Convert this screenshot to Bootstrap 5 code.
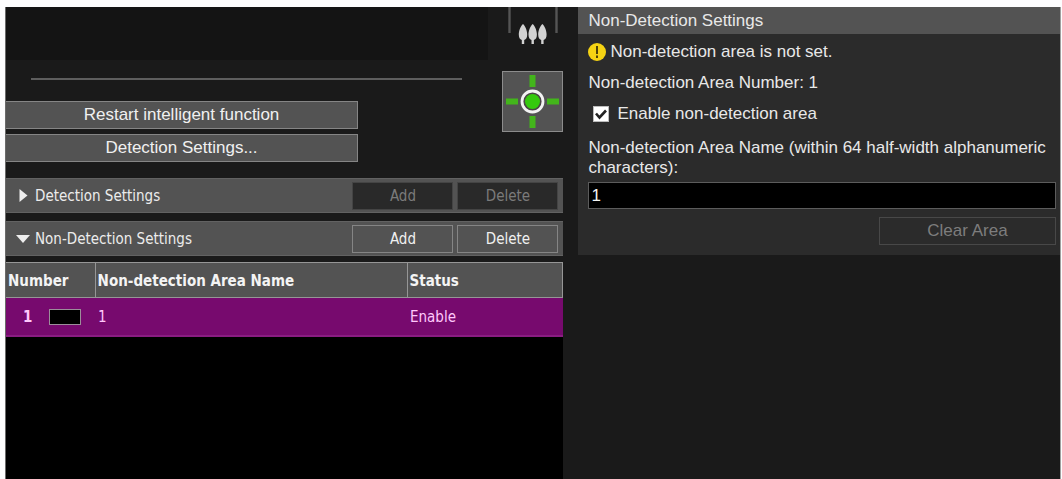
<!DOCTYPE html>
<html lang="en">
<head>
<meta charset="utf-8">
<meta name="viewport" content="width=device-width, initial-scale=1">
<title>Non-Detection Settings</title>
<link href="https://cdn.jsdelivr.net/npm/bootstrap@5.3.0/dist/css/bootstrap.min.css" rel="stylesheet">
<style>
  body { background: #fdfdfe; font: 17px/20px "Liberation Sans", Arial, sans-serif; color: #e8e8e8; }
  .shell { background: #1a1a1a; border-left: 1px solid #6a6a6a; border-right: 1px solid #a0a0a0; margin: 7px 1px 0 5px; min-height: calc(100vh - 7px); display: grid; grid-template-columns: 558fr 482fr; column-gap: 15px; }
  .view-strip { background: #141414; height: 53px; width: 482px; max-width: 100%; }
  .track { border: 0; border-top: 2px solid #5e5e5e; opacity: 1; margin: 18px 40px 21px 25px; }
  .zoom-end { width: 50px; height: 37px; }
  .btn { --bs-btn-font-size: 17px; --bs-btn-line-height: 20px; --bs-btn-padding-y: 2px; --bs-btn-padding-x: 6px; --bs-btn-border-radius: 0; --bs-btn-color: #f0f0f0; --bs-btn-bg: #535353; --bs-btn-border-color: #858585; --bs-btn-hover-color: #fff; --bs-btn-hover-bg: #616161; --bs-btn-hover-border-color: #999; --bs-btn-active-bg: #444; --bs-btn-active-color: #fff; --bs-btn-disabled-opacity: 1; height: 28px; }
  .wide-actions { width: 352px; max-width: 100%; gap: 5px; }
  .wide-actions .btn { border-left-width: 0; }
  .end-tools { gap: 27px; }
  .tool-btn { width: 61px; height: 61px; --bs-btn-padding-y: 0; --bs-btn-padding-x: 0; --bs-btn-border-color: #8c8c8c; }
  .tahoma { font-family: "DejaVu Sans Condensed", "DejaVu Sans", sans-serif; font-size: 15px; }
  .section-bar { background: #535353; border-top: 1px solid #626262; border-bottom: 1px solid #626262; height: 35px; padding-right: 5px; gap: 4px; }
  .section-bar .btn { width: 101px; font-size: 15px; font-family: inherit; }
  .section-bar .btn:disabled { --bs-btn-disabled-bg: #292929; --bs-btn-disabled-color: #7b7b7b; --bs-btn-disabled-border-color: #444; }
  .fold { background: none; border: 0; padding: 0 0 0 10px; color: #ececec; font-size: 15px; gap: 5px; }
  .area-list { background: #000; margin-top: 6px; }
  .area-table { --bs-table-bg: transparent; margin: 0; table-layout: fixed; color: #f0f0f0; line-height: 20px; }
  .area-table th, .area-table td { border: 0; vertical-align: middle; padding: 1px 3px 0; }
  .area-table thead th { height: 35px; background: #535353; border: 1px solid #969696; border-left-width: 0; padding: 2px 2px 0; color: #f4f4f4; }
  .area-table tbody td, .area-table tbody th { height: 38px; background: #770a6e; border-bottom: 2px solid #8a1d82; color: #ffc8fb; }
  .swatch { width: 32px; height: 16px; background: #000; border: 1px solid #9c8d9a; }
  .row-key { padding-left: 14px; gap: 17px; }
  .side-panel { background: #2b2b2b; }
  .side-title { background: #535353; font-size: 17px; line-height: 20px; padding: 4px 10px 3px; }
  .side-body { padding: 8px 4px 10px 10px; }
  .side-body .stack-row { margin-bottom: 11px; }
  .side-body .check-row { margin-bottom: 14px; padding-left: 5px; gap: 8px; }
  .form-check-input { margin: 0; width: 16px; height: 16px; border-radius: 0 !important; background-color: #fff; border: 1px solid #bbb; }
  .form-check-input:checked { background-color: #fff; border-color: #bbb; background-size: 16px; background-image: url("data:image/svg+xml,%3Csvg xmlns='http://www.w3.org/2000/svg' viewBox='0 0 16 16'%3E%3Cpath d='M3 7.500l3.500 4 6.500-7' fill='none' stroke='%23222' stroke-width='2.600'/%3E%3C/svg%3E"); }
  .form-control, .form-control:focus { background: #000; color: #f4f4f4; border: 1px solid #5c5c5c; border-radius: 0; font-size: 17px; line-height: 20px; padding: 2px; height: 27px; min-height: 0; margin-top: 4px; }
  .clear-btn { width: 177px; --bs-btn-disabled-bg: #2b2b2b; --bs-btn-disabled-color: #7d7d7d; --bs-btn-disabled-border-color: #484848; }
</style>
</head>
<body>
<main class="shell">
  <section class="d-flex flex-column">
    <div class="d-flex">
      <div class="flex-grow-1">
        <div class="view-strip"></div>
        <hr class="track">
        <div class="wide-actions d-flex flex-column">
          <button type="button" class="btn">Restart intelligent function</button>
          <button type="button" class="btn">Detection Settings...</button>
        </div>
      </div>
      <div class="end-tools d-flex flex-column align-items-center">
        <svg class="zoom-end" viewBox="0 0 50 37" role="img" aria-label="Telephoto end">
          <path d="M1.500 0v26M48.500 0v26" stroke="#555" stroke-width="2.400"/>
          <g fill="#d2d2d2">
            <path id="tree" d="M15 17c2 1.500 4.200 6.500 4.200 10.500 0 3-1 5-3 5.500v4h-2.400v-4c-2-.5-3-2.500-3-5.500 0-4 2.200-9 4.200-10.500z"/>
            <use href="#tree" x="9.700"/><use href="#tree" x="19.400"/>
          </g>
        </svg>
        <button type="button" class="btn tool-btn" aria-label="Auto adjust">
          <svg class="d-block" width="59" height="59" viewBox="0 0 59 59">
            <path d="M29.500 3v12M29.500 44v12M3 29.500h12M44 29.500h12" stroke="#43b51b" stroke-width="6"/>
            <circle cx="29.500" cy="29.500" r="10.500" fill="#4a4545" stroke="#f3f3f3" stroke-width="2.800"/>
            <circle cx="29.500" cy="29.500" r="7.500" fill="#35c90d"/>
          </svg>
        </button>
      </div>
    </div>

    <div class="tahoma d-flex flex-column gap-2 pt-3">
      <div class="section-bar d-flex align-items-center">
        <button type="button" class="fold d-flex align-items-center flex-grow-1" aria-expanded="false">
          <svg width="14" height="14" viewBox="0 0 14 14"><path d="M3.500 0v13l8-6.500z" fill="#eee"/></svg>Detection Settings</button>
        <button type="button" class="btn" disabled>Add</button>
        <button type="button" class="btn" disabled>Delete</button>
      </div>
      <div class="section-bar d-flex align-items-center">
        <button type="button" class="fold d-flex align-items-center flex-grow-1" aria-expanded="true">
          <svg width="14" height="14" viewBox="0 0 14 14"><path d="M0 3h14l-7 8z" fill="#eee"/></svg>Non-Detection Settings</button>
        <button type="button" class="btn">Add</button>
        <button type="button" class="btn">Delete</button>
      </div>
    </div>

    <div class="area-list tahoma flex-grow-1">
      <table class="table area-table">
        <colgroup><col style="width:16%"><col style="width:56%"><col></colgroup>
        <thead><tr><th scope="col">Number</th><th scope="col">Non-detection Area Name</th><th scope="col">Status</th></tr></thead>
        <tbody><tr>
          <th scope="row"><div class="row-key d-flex align-items-center">1<span class="swatch"></span></div></th>
          <td>1</td><td>Enable</td>
        </tr></tbody>
      </table>
    </div>
  </section>

  <aside>
    <div class="side-panel">
      <h1 class="side-title m-0 fw-normal">Non-Detection Settings</h1>
      <form class="side-body">
        <div class="stack-row d-flex align-items-center gap-1">
          <svg width="18" height="20" viewBox="0 0 18 20"><circle cx="9" cy="10" r="9" fill="#f5d313"/><path d="M9 4v8M9 13.500v2.500" stroke="#4d4208" stroke-width="2"/></svg>
          <span>Non-detection area is not set.</span>
        </div>
        <div class="stack-row">Non-detection Area Number: 1</div>
        <div class="check-row d-flex align-items-center">
          <input class="form-check-input" type="checkbox" id="enableArea" checked>
          <label for="enableArea">Enable non-detection area</label>
        </div>
        <label for="areaName" class="d-block">Non-detection Area Name (within 64 half-width alphanumeric characters):</label>
        <input type="text" class="form-control" id="areaName" value="1" maxlength="64">
        <div class="d-flex justify-content-end pt-2"><button type="button" class="btn clear-btn" disabled>Clear Area</button></div>
      </form>
    </div>
  </aside>
</main>
<script src="https://cdn.jsdelivr.net/npm/bootstrap@5.3.0/dist/js/bootstrap.bundle.min.js"></script>
</body>
</html>
